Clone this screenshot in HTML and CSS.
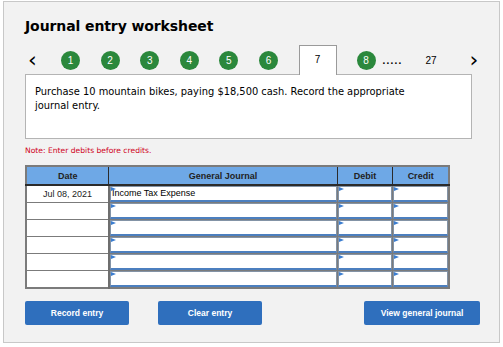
FILE: index.html
```html
<!DOCTYPE html>
<html lang="en">

<head>
  <meta charset="UTF-8" />
  <meta name="viewport" content="width=device-width, initial-scale=1.0" />
  <title>Journal entry worksheet</title>
  <link rel="stylesheet" href="styles.css">
</head>

<body>

  <div class="worksheet">
    <h1 class="title">Journal entry worksheet</h1>

    <!-- navegação entre os passos -->
    <div class="steps">
      <span class="arrow prev">&lsaquo;</span>
      <span class="step done">1</span>
      <span class="step done">2</span>
      <span class="step done">3</span>
      <span class="step done">4</span>
      <span class="step done">5</span>
      <span class="step done">6</span>
      <span class="step current">7</span>
      <span class="step done">8</span>
      <span class="dots">.....</span>
      <span class="last">27</span>
      <span class="arrow next">&rsaquo;</span>
    </div>

    <div class="question">
      <p>Purchase 10 mountain bikes, paying $18,500 cash. Record the appropriate journal entry.</p>
    </div>

    <p class="note">Note: Enter debits before credits.</p>

    <table class="journal">
      <thead>
        <tr>
          <th class="col-date">Date</th>
          <th class="col-account">General Journal</th>
          <th class="col-money">Debit</th>
          <th class="col-money">Credit</th>
        </tr>
      </thead>
      <tbody>
        <tr>
          <td class="date">Jul 08, 2021</td>
          <td><div class="field">Income Tax Expense</div></td>
          <td><div class="field"></div></td>
          <td><div class="field"></div></td>
        </tr>
        <tr>
          <td class="date"></td>
          <td><div class="field"></div></td>
          <td><div class="field"></div></td>
          <td><div class="field"></div></td>
        </tr>
        <tr>
          <td class="date"></td>
          <td><div class="field"></div></td>
          <td><div class="field"></div></td>
          <td><div class="field"></div></td>
        </tr>
        <tr>
          <td class="date"></td>
          <td><div class="field"></div></td>
          <td><div class="field"></div></td>
          <td><div class="field"></div></td>
        </tr>
        <tr>
          <td class="date"></td>
          <td><div class="field"></div></td>
          <td><div class="field"></div></td>
          <td><div class="field"></div></td>
        </tr>
        <tr>
          <td class="date"></td>
          <td><div class="field"></div></td>
          <td><div class="field"></div></td>
          <td><div class="field"></div></td>
        </tr>
      </tbody>
    </table>

    <div class="actions">
      <button class="btn">Record entry</button>
      <button class="btn">Clear entry</button>
      <button class="btn wide">View general journal</button>
    </div>
  </div>

</body>

</html>
```

FILE: styles.css
```css
/* Página */
body {
  margin: 0;
  background: #fff;
  font-family: "DejaVu Sans", Verdana, sans-serif;
  color: #000;
}

.worksheet {
  margin: 1px 3px 0 3px;
  height: 342px;
  box-sizing: border-box;
  border: 1px solid #c8c8c8;
  background: #f2f2f2;
  padding: 0 0 0 21px;
}

.title {
  margin: 0;
  padding-top: 16px;
  font-size: 14px;
  line-height: 17px;
  font-weight: bold;
  letter-spacing: -0.1px;
}

/* Passos */
.steps {
  display: flex;
  align-items: center;
  height: 30px;
  margin-top: 10px;
  margin-bottom: -1px;
  font-family: "Liberation Sans", Arial, sans-serif;
  font-size: 10px;
}

.arrow {
  font-family: "DejaVu Sans", sans-serif;
  font-size: 22px;
  line-height: 30px;
  width: 8px;
}

.prev {
  margin-left: 3px;
  margin-right: 25px;
}

.step {
  display: flex;
  align-items: center;
  justify-content: center;
  margin-right: 20.6px;
}

.step.done {
  width: 19px;
  height: 19px;
  border-radius: 50%;
  background: #2b883c;
  color: #fff;
}

.step.current {
  position: relative;
  z-index: 1;
  width: 38px;
  height: 30px;
  box-sizing: border-box;
  border: 1px solid #9a9a9a;
  border-bottom: none;
  background: #fff;
  margin-right: 20px;
  padding-bottom: 2px;
}

.step.done:nth-of-type(9) {
  margin-right: 7px;
}

.dots {
  font-weight: bold;
  letter-spacing: 1.2px;
  width: 43px;
}

.last {
  width: 44px;
}

/* Enunciado */
.question {
  width: 447px;
  height: 65px;
  box-sizing: border-box;
  border: 1px solid #b4b4b4;
  background: #fff;
  padding: 10px 9px;
}

.question p {
  margin: 0;
  width: 380px;
  font-size: 9.9px;
  line-height: 14px;
}

.note {
  margin: 7px 0 10px 0;
  font-size: 7.6px;
  color: #d0021b;
}

/* Tabela do diário */
.journal {
  border-collapse: collapse;
  width: 425px;
  font-family: "Liberation Sans", Arial, sans-serif;
  font-size: 9px;
  border: 2px solid #7b7b7b;
}

.journal th {
  height: 17px;
  padding: 0;
  background: #6ea8e6;
  color: #222;
  font-weight: bold;
  border-left: 1px solid #2b2b2b;
  border-bottom: 2px solid #2b2b2b;
}

.journal th:first-child {
  border-left: none;
}

.col-date {
  width: 82px;
}

.col-account {
  width: 229px;
}

.col-money {
  width: 55px;
}

.journal td {
  height: 16px;
  padding: 0;
  border: 1px solid #7b7b7b;
  background: #fff;
}

.journal td.date {
  text-align: center;
  color: #222;
}

.journal td:nth-child(2) {
  border-left: 2px solid #6e6e6e;
}

.field {
  position: relative;
  height: 16px;
  box-sizing: border-box;
  border: 1px solid #8393a6;
  border-bottom: 2px solid #4c7fbf;
  padding-left: 1px;
  line-height: 12px;
  background: #fff;
}

/* marcador azul no canto do campo */
.field::before {
  content: "";
  position: absolute;
  left: 0;
  top: 0;
  border-left: 5px solid #3b7dd0;
  border-top: 2px solid transparent;
  border-bottom: 2px solid transparent;
}

/* Botões */
.actions {
  display: flex;
  margin-top: 12px;
  width: 455px;
}

.btn {
  height: 24px;
  width: 104px;
  border: none;
  border-radius: 2px;
  background: #2f6fbd;
  color: #fff;
  font-family: "Liberation Sans", Arial, sans-serif;
  font-size: 8.5px;
  font-weight: bold;
  padding: 0;
  margin-right: 29px;
}

.btn.wide {
  width: 116px;
  margin-right: 0;
  margin-left: auto;
}
```
